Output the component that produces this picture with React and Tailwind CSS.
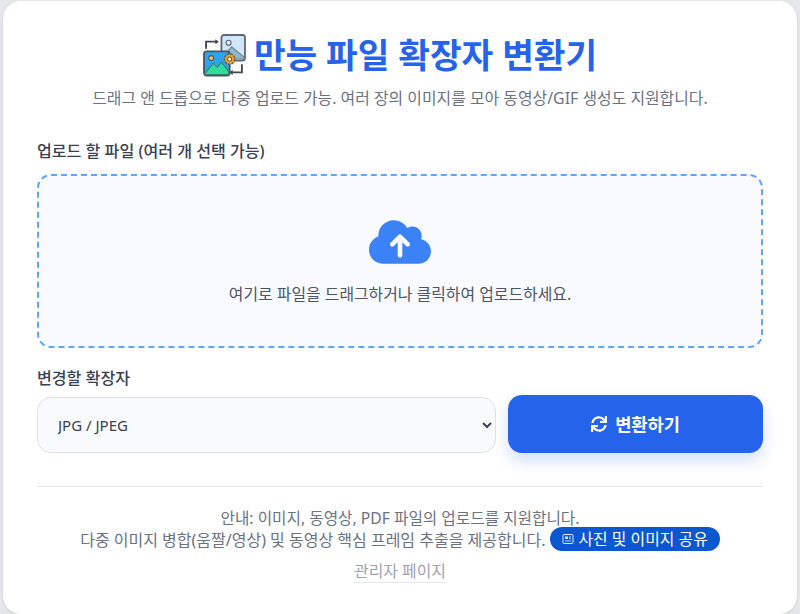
import React from 'react';
import { FaSync } from 'react-icons/fa';
import { FaCloudArrowUp } from 'react-icons/fa6';

const FONT = "font-['Noto_Sans','Noto_Sans_CJK_KR',sans-serif]";

function ConvertLogo() {
  return (
    <svg width="43" height="44" viewBox="0 0 42 42" className="shrink-0">
      {/* back picture */}
      <rect x="18" y="1.5" width="23" height="25" rx="2.5" fill="#cfe6fb" stroke="#5f6a72" strokeWidth="1.8" />
      <circle cx="25" cy="9" r="2.4" fill="#eef6fd" stroke="#5f6a72" strokeWidth="1.2" />
      <path d="M20 22 L28 13 L40 23 L40 25 L20 25 Z" fill="#8fb6cc" stroke="#6d8796" strokeWidth="1" />
      {/* arrows */}
      <path d="M3 15 V8 H13" fill="none" stroke="#3f464d" strokeWidth="1.8" />
      <path d="M12 5.5 L15.5 8 L12 10.5 Z" fill="#3f464d" />
      <path d="M38 30 V38 H28" fill="none" stroke="#3f464d" strokeWidth="1.8" />
      <path d="M29 35.5 L25.5 38 L29 40.5 Z" fill="#3f464d" />
      {/* front picture */}
      <rect x="1" y="17.5" width="25" height="23.5" rx="2.5" fill="#2fa3ee" stroke="#4b5560" strokeWidth="1.8" />
      <circle cx="8" cy="24" r="2.4" fill="#f7c948" stroke="#4b5560" strokeWidth="1" />
      <path d="M2 39 L10 29 L14 33 L18 28 L25 37 V40 H2 Z" fill="#2fdc9b" stroke="#3d7d6a" strokeWidth="1" />
      {/* gear */}
      <circle cx="26" cy="25" r="5" fill="#f2a52b" stroke="#6b5a35" strokeWidth="1.4" strokeDasharray="2.4 1" />
      <circle cx="26" cy="25" r="2" fill="#fff" stroke="#6b5a35" strokeWidth="1" />
    </svg>
  );
}

function PillIcon() {
  return (
    <svg width="12" height="12" viewBox="0 0 12 12" className="shrink-0">
      <rect x="1" y="1.5" width="10" height="9" rx="1" fill="none" stroke="#dbe7fb" strokeWidth="1" />
      <rect x="3" y="3.5" width="3" height="2.5" fill="#dbe7fb" />
      <path d="M3 8 H9 M7 4 H9 M7 5.7 H9" stroke="#dbe7fb" strokeWidth="0.8" />
    </svg>
  );
}

export default function App() {
  return (
    <div className={`${FONT} h-[614px] overflow-hidden bg-[#e5e7eb] px-[3px] pt-px`}>
      <div className="h-[613px] rounded-[18px] bg-white px-[34px] shadow-sm">
        <div className="flex items-center justify-center gap-[8px] pt-[32px]">
          <ConvertLogo />
          <h1 className="text-[34.4px] leading-[44px] font-bold text-[#2563eb]">만능 파일 확장자 변환기</h1>
        </div>
        <p className="mt-[10px] text-center text-[15.9px] leading-[22px] text-[#6b7280]">
          드래그 앤 드롭으로 다중 업로드 가능. 여러 장의 이미지를 모아 동영상/GIF 생성도 지원합니다.
        </p>

        <label className="mt-[32px] block text-[16.1px] leading-[20px] font-medium text-[#374151]">
          업로드 할 파일 (여러 개 선택 가능)
        </label>
        <div className="mt-[13px] flex h-[174px] flex-col items-center rounded-[14px] border-2 border-dashed border-[#60a5fa] bg-[#f8faff]">
          <FaCloudArrowUp className="mt-[35px] text-[#3b82f6]" size={62} />
          <p className="mt-[10px] text-[15.9px] leading-[22px] text-[#4b5563]">여기로 파일을 드래그하거나 클릭하여 업로드하세요.</p>
        </div>

        <label className="mt-[20px] block text-[16.1px] leading-[20px] font-medium text-[#374151]">변경할 확장자</label>
        <div className="mt-[7px] flex items-end gap-[12px]">
          <select
            defaultValue="jpg"
            className="h-[56px] flex-1 rounded-[14px] border border-[#e0e2e8] bg-[#f9fafb] pl-[16px] pr-[2px] text-[15px] text-[#374151]"
          >
            <option value="jpg">JPG / JPEG</option>
            <option value="png">PNG</option>
            <option value="webp">WEBP</option>
          </select>
          <button className="flex h-[58px] w-[255px] items-center justify-center gap-[8px] rounded-[14px] bg-[#2563eb] text-[17.6px] font-bold text-white shadow-[0_8px_16px_rgba(37,99,235,0.2)]">
            <FaSync size={16} />
            <span>변환하기</span>
          </button>
        </div>

        <div className="mt-[33px] border-t border-[#e5e7eb] pt-[20px] text-center text-[15.7px] leading-[22px] text-[#6b7280]">
          <p>안내: 이미지, 동영상, PDF 파일의 업로드를 지원합니다.</p>
          <p className="flex items-center justify-center gap-[5px]">
            <span className="text-[16px]">다중 이미지 병합(움짤/영상) 및 동영상 핵심 프레임 추출을 제공합니다.</span>
            <span className="-mt-[2px] flex h-[24px] items-center gap-[4px] rounded-full bg-[#0b57d0] px-[12px] text-[15.9px] text-white">
              <PillIcon />
              사진 및 이미지 공유
            </span>
          </p>
          <a className="mt-[9px] inline-block border-b border-[#e5e7eb] text-[15.9px] leading-[22px] text-[#9ca3af]">관리자 페이지</a>
        </div>
      </div>
    </div>
  );
}
